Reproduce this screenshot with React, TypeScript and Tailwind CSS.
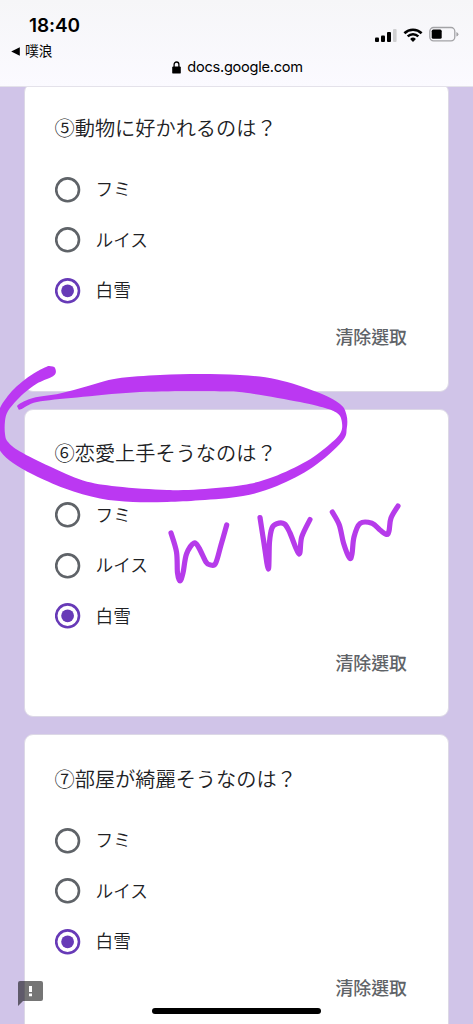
import { useState } from "react";

type Question = { id: number; title: string };

const questions: Question[] = [
    { id: 5, title: "⑤動物に好かれるのは？" },
    { id: 6, title: "⑥恋愛上手そうなのは？" },
    { id: 7, title: "⑦部屋が綺麗そうなのは？" },
];

const options = ["フミ", "ルイス", "白雪"];

function StatusBar() {
    return (
        <header className="relative z-10 h-[87px] shrink-0 border-b border-[#e4e2ea] bg-linear-to-b from-[#f6f6f8] to-[#fbfaff] font-['Inter','Noto_Sans_CJK_TC',sans-serif] text-black">
            <div className="flex items-start justify-between pt-[14px] pr-[14px] pl-[29px]">
                <span className="text-[19px] leading-6 font-semibold tracking-[-0.1px]">18:40</span>
                <div className="flex items-center pt-[12px]">
                    <svg width="22" height="15" viewBox="0 0 22 15">
                        <rect x="0" y="10.5" width="4" height="4.5" rx="1" />
                        <rect x="6" y="8.5" width="4" height="6.5" rx="1" />
                        <rect x="12" y="5" width="4" height="10" rx="1" />
                        <rect x="18" y="2" width="3.6" height="13" rx="1" fill="#cfcfd1" />
                    </svg>
                    <svg width="20" height="15" viewBox="0 0 20 15" className="ml-[6px]">
                        <path d="M1.4 6.2A12.4 12.4 0 0 1 18.6 6.2" fill="none" stroke="black" strokeWidth="2.6" />
                        <path d="M4.7 9.4A7.6 7.6 0 0 1 15.3 9.4" fill="none" stroke="black" strokeWidth="2.5" />
                        <path d="M10 15L7.1 12A4.2 4.2 0 0 1 12.9 12Z" />
                    </svg>
                    <svg width="30" height="16" viewBox="0 0 30 16" className="ml-[6px]">
                        <rect x="0.8" y="1.5" width="25" height="13.4" rx="3.8" fill="none" stroke="#a3a3a6" strokeWidth="1.3" />
                        <rect x="2.7" y="3.6" width="10" height="9.2" rx="1.6" />
                        <path d="M27.4 5.9Q29.4 6.5 29.4 8.2T27.4 10.4Z" fill="#a3a3a6" />
                    </svg>
                </div>
            </div>
            <div className="-mt-px flex h-5 items-center gap-[5px] pl-[11px]">
                <svg width="9" height="9" viewBox="0 0 9 9">
                    <path d="M0.2 4.5L8.8 0.3V8.7Z" />
                </svg>
                <span className="text-[13.8px] leading-5">噗浪</span>
            </div>
            <div className="-mt-[4px] flex h-5 items-center justify-center gap-[6px] pl-[2px]">
                <svg width="9" height="13" viewBox="0 0 9 13">
                    <path d="M2.1 6V3.6a2.4 2.6 0 0 1 4.8 0V6" fill="none" stroke="black" strokeWidth="1.3" />
                    <rect x="0.2" y="5.4" width="8.6" height="7.2" rx="1.2" />
                </svg>
                <span className="text-[14.6px] leading-5 tracking-[-0.27px]">docs.google.com</span>
            </div>
        </header>
    );
}

function Radio({ checked }: { checked: boolean }) {
    return (
        <svg width="26" height="26" viewBox="0 0 26 26" className={checked ? "text-[#673ab7]" : "text-[#5f6368]"}>
            <circle cx="12.6" cy="12.8" r="11.4" fill="none" stroke="currentColor" strokeWidth="2.6" />
            {checked && <circle cx="12.6" cy="12.8" r="6.4" fill="currentColor" />}
        </svg>
    );
}

function QuestionCard({ title }: Question) {
    const [selected, setSelected] = useState<string | null>("白雪");

    return (
        <section className="h-[308.5px] shrink-0 rounded-[9px] border border-[#dcd8e6] bg-white px-[29.5px] pt-[27.4px]">
            <h2 className="text-[20.2px] leading-[32px] font-[350] whitespace-nowrap text-[#202124]">{title}</h2>
            <div className="mt-[20.7px]">
                {options.map((option) => (
                    <button
                        key={option}
                        onClick={() => setSelected(option)}
                        className="flex h-[50.5px] items-center gap-[15px] text-[17.7px] font-[350] text-[#202124]"
                    >
                        <Radio checked={selected === option} />
                        <span className="-mt-[2.5px]">{option}</span>
                    </button>
                ))}
            </div>
            <div className="flex justify-end pt-[8.5px] pr-[11.5px]">
                <button
                    onClick={() => setSelected(null)}
                    className="font-['Noto_Sans_CJK_TC',sans-serif] text-[17.9px] leading-6 font-medium text-[#5f6368]"
                >
                    清除選取
                </button>
            </div>
        </section>
    );
}

type Point = [number, number];

// Catmull-Rom spline through the points, as cubic segments
function curve(points: Point[]) {
    let d = `M${points[0][0]} ${points[0][1]}`;
    for (let i = 0; i < points.length - 1; i++) {
        const p0 = points[Math.max(i - 1, 0)];
        const p1 = points[i];
        const p2 = points[i + 1];
        const p3 = points[Math.min(i + 2, points.length - 1)];
        d += `C${p1[0] + (p2[0] - p0[0]) / 6} ${p1[1] + (p2[1] - p0[1]) / 6} ${p2[0] - (p3[0] - p1[0]) / 6} ${p2[1] - (p3[1] - p1[1]) / 6} ${p2[0]} ${p2[1]}`;
    }
    return d;
}

// The loop is a filled outline because the pen width changes along the way
const loop: Point[] = [
    [48, 366], [37, 371.5], [25, 379.5], [14, 389], [6, 398.5], [0, 408], [-3, 420], [-3, 440], [1, 452], [13, 463],
    [33, 474.5], [65, 488.5], [100, 498.5], [133, 502], [167, 502], [200, 500.3], [243, 496],
    [277, 486], [313, 467], [342, 441.5], [346.8, 428], [346.5, 415], [340, 404], [317, 392],
    [277, 379.5], [240, 375], [200, 374], [160, 375], [117, 378.5], [88, 386], [60, 393.5],
    [33, 398], [18.5, 404.5], [18, 408], [21, 409.3], [37, 402], [77, 397.5], [133, 392.5],
    [187, 391.3], [225, 391.5], [250, 393.3], [300, 402], [325, 408], [337, 413], [341.5, 420],
    [341, 432], [330, 444], [307, 461], [273, 477], [243, 485], [200, 489.3], [167, 490],
    [117, 486.5], [83, 480.5], [50, 466.5], [20, 451.5], [8, 442], [5, 434], [5, 421], [8, 411],
    [17, 400], [26, 391.5], [37, 383.5], [52, 376.8], [55.8, 372.5], [54.2, 367], [48, 366],
];

const letters: Point[][] = [
    [[171, 533], [176.5, 552], [177.5, 573], [180, 581], [183, 573], [186.5, 554], [194, 543], [199, 548], [206, 562], [210, 564.8], [215.5, 563.5], [221, 545], [226.7, 525]],
    [[260, 517.5], [263.5, 540], [268.3, 569], [269.5, 542], [272, 528], [276.7, 523.7], [284.5, 524], [290, 533], [299, 554], [301.7, 537], [310, 519.5]],
    [[332.3, 512], [339.3, 525], [343.5, 543], [349.5, 558], [352, 554], [354, 537], [360, 523.5], [372, 523.3], [380, 530], [386.5, 534.5], [389, 531], [391, 518], [398, 506]],
];

function PenMarks() {
    return (
        <svg className="pointer-events-none absolute inset-0 z-20" width="473" height="1024" viewBox="0 0 473 1024">
            <path d={curve(loop)} fill="#bb38f2" />
            {letters.map((points, i) => (
                <path key={i} d={curve(points)} fill="none" stroke="#b63bea" strokeWidth="5.2" strokeLinecap="round" strokeLinejoin="round" />
            ))}
        </svg>
    );
}

export default function App() {
    return (
        <div className="relative flex h-[1024px] w-[473px] flex-col overflow-hidden bg-[#d0c4e8] font-['Noto_Sans_CJK_JP',sans-serif]">
            <StatusBar />
            <main className="-mt-[3.6px] flex flex-col gap-[17px] pr-[24px] pl-[24px]">
                {questions.map((question) => (
                    <QuestionCard key={question.id} {...question} />
                ))}
            </main>
            <PenMarks />

            {/* Report a problem */}
            <button className="absolute top-[981px] left-[18px] z-20" aria-label="報告問題">
                <svg width="25" height="25" viewBox="0 0 25 25" className="block">
                    <path d="M2 0H23a2 2 0 0 1 2 2V18a2 2 0 0 1-2 2H5L0 25V2a2 2 0 0 1 2-2Z" fill="black" fillOpacity="0.54" />
                    <path d="M11 5h3v6h-3zM11 12.5h3v2.7h-3z" fill="white" />
                </svg>
            </button>

            {/* Home indicator */}
            <div className="absolute bottom-[10px] left-[152px] z-20 h-[6.5px] w-[169px] rounded-full bg-black" />
        </div>
    );
}
